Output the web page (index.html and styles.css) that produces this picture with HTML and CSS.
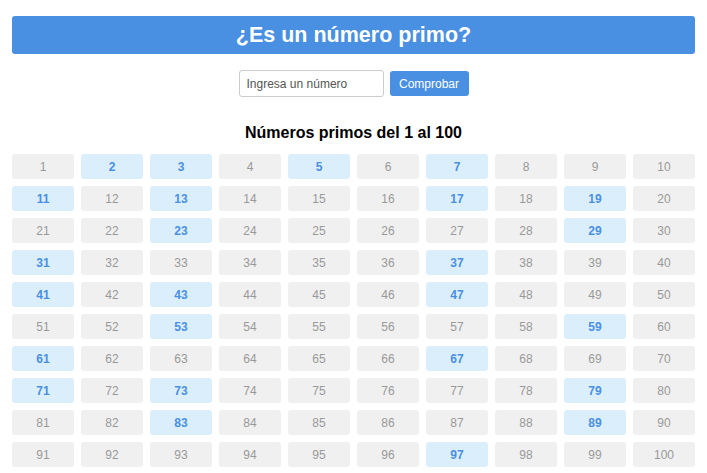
FILE: index.html
```html
<!DOCTYPE html>
<html lang="es">
<head>
<meta charset="utf-8">
<title>¿Es un número primo?</title>
<link rel="stylesheet" href="styles.css">
</head>
<body>
<div class="page">
  <header class="banner"><h1>¿Es un número primo?</h1></header>
  <form class="check" onsubmit="return false">
    <input class="num-input" type="text" placeholder="Ingresa un número">
    <button class="btn" type="submit">Comprobar</button>
  </form>
  <h2 class="subtitle">Números primos del 1 al 100</h2>
  <div class="grid" id="grid"></div>
</div>
<script src="script.js"></script>
</body>
</html>
```
FILE: styles.css
```css
* { box-sizing: border-box; }
body {
  margin: 0;
  font-family: "Liberation Sans", Arial, sans-serif;
  background: #fff;
  color: #000;
}
.page { padding: 16px 12px 0; }
.banner {
  background: #4a90e2;
  border-radius: 3px;
  height: 38px;
  display: flex;
  align-items: center;
  justify-content: center;
}
.banner h1 {
  margin: 0;
  color: #fff;
  font-size: 21.5px;
  font-weight: bold;
}
.check {
  display: flex;
  justify-content: center;
  align-items: center;
  gap: 6px;
  margin-top: 16px;
}
.num-input {
  width: 145px;
  height: 27px;
  border: 1px solid #ccc;
  border-radius: 3px;
  padding: 0 7px;
  font-family: "Liberation Sans", Arial, sans-serif;
  font-size: 12px;
  color: #333;
}
.num-input::placeholder { color: #555; }
.btn {
  width: 79px;
  height: 25px;
  background: #4a90e2;
  color: #fff;
  border: none;
  border-radius: 3px;
  font-family: "Liberation Sans", Arial, sans-serif;
  font-size: 12px;
}
.subtitle {
  margin: 24px 0 0;
  text-align: center;
  font-size: 16px;
  font-weight: bold;
  line-height: 24px;
}
.grid {
  display: grid;
  grid-template-columns: repeat(10, 1fr);
  gap: 7px;
  margin-top: 9px;
}
.cell {
  height: 25px;
  background: #f0f0f0;
  border-radius: 3px;
  display: flex;
  align-items: center;
  justify-content: center;
  font-size: 12px;
  color: #999;
}
.cell.prime {
  background: #dbeefb;
  color: #4a90e2;
  font-weight: bold;
}
```
FILE: script.js
```js
function isPrime(n) {
  if (n < 2) return false;
  for (var i = 2; i * i <= n; i++) if (n % i === 0) return false;
  return true;
}
var g = document.getElementById('grid');
for (var n = 1; n <= 100; n++) {
  var d = document.createElement('div');
  d.className = 'cell' + (isPrime(n) ? ' prime' : '');
  d.textContent = n;
  g.appendChild(d);
}
```
